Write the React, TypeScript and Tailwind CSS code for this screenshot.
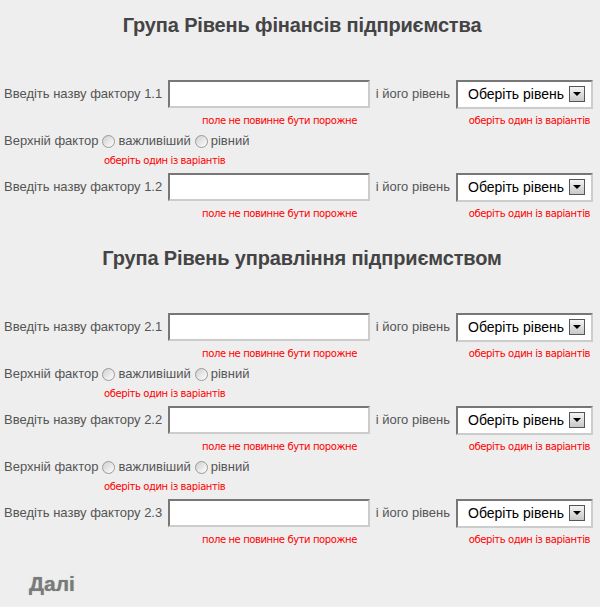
const font = { fontFamily: '"Liberation Sans", Arial, sans-serif' };
const errFont = { fontFamily: '"DejaVu Sans", Verdana, sans-serif' };

type Factor = { id: string; radio: boolean };

const groups: { title: string; factors: Factor[]; first?: boolean }[] = [
  {
    title: "Група Рівень фінансів підприємства",
    first: true,
    factors: [
      { id: "1.1", radio: true },
      { id: "1.2", radio: false },
    ],
  },
  {
    title: "Група Рівень управління підприємством",
    factors: [
      { id: "2.1", radio: true },
      { id: "2.2", radio: true },
      { id: "2.3", radio: false },
    ],
  },
];

function Radio() {
  return (
    <span className="ml-[4px] mr-[3px] inline-block h-[13px] w-[13px] shrink-0 rounded-full border border-[#9a9a9a] bg-gradient-to-br from-[#cfcfcf] to-[#ffffff]" />
  );
}

function LevelSelect() {
  return (
    <div className="flex h-[29px] w-[137px] shrink-0 items-center justify-between border-2 border-t-[#777777] border-l-[#777777] border-r-[#cccccc] border-b-[#cccccc] bg-white pl-[10px] pr-[6px]">
      <span className="text-[14px] text-black">Оберіть рівень</span>
      <span className="flex h-[16px] w-[16px] items-center justify-center border border-[#555] bg-gradient-to-b from-[#f4f4f4] to-[#c8c8c8]">
        <span className="h-0 w-0 border-x-[4px] border-t-[4px] border-x-transparent border-t-black" />
      </span>
    </div>
  );
}

function FactorBlock({ f }: { f: Factor }) {
  return (
    <div className={f.radio ? "mb-[3px]" : ""}>
      <div className="flex h-[28px] items-center">
        <div className="w-[168px] shrink-0 pl-[4px] text-[13px] text-[#555]">Введіть назву фактору {f.id}</div>
        <div className="h-[28px] w-[202px] shrink-0 border-2 border-t-[#777777] border-l-[#777777] border-r-[#cccccc] border-b-[#cccccc] bg-white" />
        <div className="flex w-[86px] shrink-0 justify-end pr-[6px] text-[13px] text-[#555]">
          <span>і його рівень</span>
        </div>
        <LevelSelect />
      </div>
      <div className="flex h-[24px] items-center text-[10px] tracking-[-0.4px] text-[#f00]" style={errFont}>
        <div className="flex w-[370px] justify-end pr-[13px]">
          <span>поле не повинне бути порожне</span>
        </div>
        <div className="flex w-[223px] justify-end pr-[3px]">
          <span>оберіть один із варіантів</span>
        </div>
      </div>
      {f.radio && (
        <>
          <div className="flex h-[18px] items-center pl-[4px] text-[13px] text-[#555]">
            <span>Верхній фактор</span>
            <Radio />
            <span>важливіший</span>
            <Radio />
            <span>рівний</span>
          </div>
          <div className="flex h-[20px] items-center pl-[104px] text-[10px] tracking-[-0.4px] text-[#f00]" style={errFont}>
            оберіть один із варіантів
          </div>
        </>
      )}
    </div>
  );
}

export default function App() {
  return (
    <div className="min-h-[607px] w-[600px] bg-[#eeeeee]" style={font}>
      {groups.map((g) => (
        <section key={g.title}>
          <h2 className={`${g.first ? "pt-[10px]" : "pt-[18px]"} mb-[40px] flex justify-center pl-[4px]`}>
            <span className="flex h-[30px] items-center text-[20px] font-bold tracking-[-0.15px] text-[#444]">{g.title}</span>
          </h2>
          {g.factors.map((f) => (
            <FactorBlock key={f.id} f={f} />
          ))}
        </section>
      ))}
      <div className="flex h-[48px] items-end pl-[29px]">
        <span className="text-[21px] font-bold text-[#7a7a7a] [text-shadow:0_0_1px_#999]">Далі</span>
      </div>
    </div>
  );
}
